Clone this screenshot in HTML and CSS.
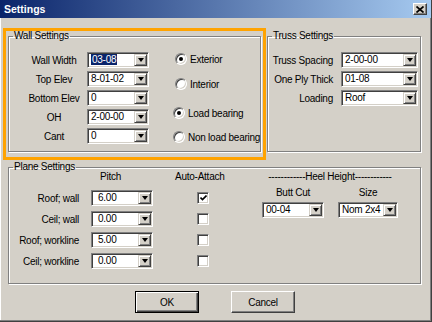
FILE: index.html
```html
<!DOCTYPE html>
<html lang="en">
<head>
    <meta charset="UTF-8">
    <meta name="viewport" content="width=device-width, initial-scale=1.0">
    <title>Settings</title>
    <link rel="stylesheet" href="styles.css">
</head>

<body>
    <div class="dialog">
        <!-- Title bar -->
        <div class="titlebar">
            <span class="title">Settings</span>
            <div class="close-btn">
                <svg width="8" height="7" viewBox="0 0 8 7">
                    <path d="M0.5 0.5 L7.5 6.5 M7.5 0.5 L0.5 6.5" stroke="#000" stroke-width="1.7" fill="none"/>
                </svg>
            </div>
        </div>

        <div class="content">
            <div class="top-row">
                <!-- Highlighted wall group -->
                <div class="highlight">
                    <fieldset class="group wall">
                        <legend>Wall Settings</legend>
                        <div class="wall-body">
                            <div class="wall-grid">
                                <span class="lbl">Wall Width</span>
                                <div class="combo"><span class="val"><span class="sel">03-08</span></span><span class="drop"></span></div>
                                <span class="lbl">Top Elev</span>
                                <div class="combo"><span class="val">8-01-02</span><span class="drop"></span></div>
                                <span class="lbl">Bottom Elev</span>
                                <div class="combo"><span class="val">0</span><span class="drop"></span></div>
                                <span class="lbl">OH</span>
                                <div class="combo"><span class="val">2-00-00</span><span class="drop"></span></div>
                                <span class="lbl">Cant</span>
                                <div class="combo"><span class="val">0</span><span class="drop"></span></div>
                            </div>
                            <div class="radios">
                                <div class="radio-row first"><span class="radio on"></span>Exterior</div>
                                <div class="radio-row second"><span class="radio"></span>Interior</div>
                                <div class="radio-row third"><span class="radio on"></span>Load bearing</div>
                                <div class="radio-row fourth"><span class="radio"></span>Non load bearing</div>
                            </div>
                        </div>
                    </fieldset>
                </div>

                <!-- Truss group -->
                <fieldset class="group truss">
                    <legend>Truss Settings</legend>
                    <div class="truss-grid">
                        <span class="lbl">Truss Spacing</span>
                        <div class="combo wide"><span class="val">2-00-00</span><span class="drop"></span></div>
                        <span class="lbl">One Ply Thick</span>
                        <div class="combo wide"><span class="val">01-08</span><span class="drop"></span></div>
                        <span class="lbl">Loading</span>
                        <div class="combo wide"><span class="val">Roof</span><span class="drop"></span></div>
                    </div>
                </fieldset>
            </div>

            <!-- Plane group -->
            <fieldset class="group plane">
                <legend>Plane Settings</legend>
                <div class="plane-body">
                    <div class="pitch-grid">
                        <span></span>
                        <span class="hdr pitch-hdr">Pitch</span>
                        <span class="hdr">Auto-Attach</span>

                        <span class="lbl">Roof; wall</span>
                        <div class="combo pad"><span class="val">6.00</span><span class="drop"></span></div>
                        <span class="check on"><svg width="7" height="6" viewBox="0 0 7 6"><path d="M0.5 2.5 L2.5 4.5 L6.5 0.5" stroke="#000" stroke-width="1.6" fill="none"/></svg></span>

                        <span class="lbl">Ceil; wall</span>
                        <div class="combo pad"><span class="val">0.00</span><span class="drop"></span></div>
                        <span class="check"></span>

                        <span class="lbl">Roof; workline</span>
                        <div class="combo pad"><span class="val">5.00</span><span class="drop"></span></div>
                        <span class="check"></span>

                        <span class="lbl">Ceil; workline</span>
                        <div class="combo pad"><span class="val">0.00</span><span class="drop"></span></div>
                        <span class="check"></span>
                    </div>

                    <div class="heel">
                        <div class="heel-title">------------Heel Height------------</div>
                        <div class="heel-cols">
                            <div class="heel-col">
                                <span>Butt Cut</span>
                                <div class="combo"><span class="val">00-04</span><span class="drop"></span></div>
                            </div>
                            <div class="heel-col">
                                <span>Size</span>
                                <div class="combo size"><span class="val">Nom 2x4</span><span class="drop"></span></div>
                            </div>
                        </div>
                    </div>
                </div>
            </fieldset>

            <div class="buttons">
                <div class="btn default">OK</div>
                <div class="btn">Cancel</div>
            </div>
        </div>
    </div>
</body>
</html>
```

FILE: styles.css
```css
body {
    margin: 0;
    font-family: "Liberation Sans", Arial, sans-serif;
    font-size: 10px;
    letter-spacing: -0.25px;
    color: #000;
}

.dialog {
    width: 432px;
    height: 322px;
    box-sizing: border-box;
    background-color: #d4d0c8;
    border-right: 1px solid #404040;
    border-bottom: 1px solid #404040;
    box-shadow: inset -1px -1px #808080, inset 1px 0 #fff;
}

/* Title bar */
.titlebar {
    height: 18px;
    display: flex;
    align-items: center;
    justify-content: space-between;
    padding: 0 4px 0 4px;
    background: linear-gradient(to right, #0a246a, #a6caf0);
}

.title {
    color: #fff;
    font-weight: bold;
    font-size: 10.5px;
    letter-spacing: 0;
}

.close-btn {
    width: 14px;
    height: 12px;
    box-sizing: border-box;
    background-color: #d4d0c8;
    border: 1px solid;
    border-color: #fff #404040 #404040 #fff;
    box-shadow: inset -1px -1px #808080;
    display: flex;
    align-items: center;
    justify-content: center;
}

.content {
    padding: 10px 0 0 3px;
}

.top-row {
    display: flex;
    align-items: flex-start;
}

/* Orange highlight around the wall group */
.highlight {
    border: 3px solid #ffa300;
    padding: 0 2px 5px 2px;
}

/* Group boxes */
.group {
    margin: 0;
    padding: 0;
    min-width: 0;
    box-sizing: border-box;
    border: 1px solid #808080;
    box-shadow: 1px 1px 0 #fff, inset 1px 1px 0 #fff;
}

.group legend {
    margin-left: 4px;
    padding: 0 1px;
    line-height: 10px;
}

.wall {
    width: 253px;
    height: 121px;
}

.truss {
    width: 154px;
    height: 121px;
    margin: 3px 0 0 1px;
}

.plane {
    width: 413px;
    height: 122px;
    margin: 2px 0 0 5px;
}

.lbl {
    align-self: center;
    white-space: nowrap;
}

/* Wall settings */
.wall-body {
    display: flex;
    padding: 11px 0 0 13px;
}

.wall-grid {
    display: grid;
    grid-template-columns: 64px 62px;
    grid-auto-rows: 16px;
    row-gap: 3px;
    column-gap: 1px;
}

.wall-grid .lbl {
    text-align: center;
}

.radios {
    margin-left: 24px;
    display: flex;
    flex-direction: column;
}

.radio-row {
    display: flex;
    align-items: center;
    gap: 3px;
    height: 12px;
    white-space: nowrap;
}

.radio-row.first { margin: 1px 0 0 2px; }
.radio-row.second { margin: 13px 0 0 2px; }
.radio-row.third { margin-top: 17px; }
.radio-row.fourth { margin-top: 12px; }

.radio {
    width: 12px;
    height: 12px;
    box-sizing: border-box;
    border-radius: 50%;
    background-color: #fff;
    border: 1px solid;
    border-color: #808080 #fff #fff #808080;
    box-shadow: inset 1px 1px #404040, inset -1px -1px #d4d0c8;
    display: flex;
    align-items: center;
    justify-content: center;
}

.radio.on::after {
    content: "";
    width: 4px;
    height: 4px;
    border-radius: 50%;
    background-color: #000;
}

/* Truss settings */
.truss-grid {
    display: grid;
    grid-template-columns: 65px 77px;
    grid-auto-rows: 16px;
    row-gap: 3px;
    column-gap: 8px;
    padding-top: 11px;
}

.truss-grid .lbl {
    text-align: right;
}

/* Combo boxes */
.combo {
    display: flex;
    box-sizing: border-box;
    width: 62px;
    height: 16px;
    padding: 1px;
    background-color: #fff;
    border: 1px solid;
    border-color: #808080 #fff #fff #808080;
    box-shadow: inset 1px 1px #404040, inset -1px -1px #d4d0c8;
}

.combo.wide { width: 77px; }
.combo.size { width: 60px; }

.combo .val {
    flex: 1;
    padding-left: 2px;
    line-height: 12px;
    overflow: hidden;
    white-space: nowrap;
}

.combo.pad .val {
    padding-left: 5px;
}

.sel {
    background-color: #0a246a;
    color: #fff;
    padding: 0 1px;
}

.drop {
    width: 13px;
    box-sizing: border-box;
    background-color: #d4d0c8;
    border: 1px solid;
    border-color: #d4d0c8 #404040 #404040 #d4d0c8;
    box-shadow: inset 1px 1px #fff, inset -1px -1px #808080;
    display: flex;
    align-items: center;
    justify-content: center;
}

.drop::after {
    content: "";
    width: 0;
    height: 0;
    border-left: 3.5px solid transparent;
    border-right: 3.5px solid transparent;
    border-top: 4px solid #000;
}

/* Plane settings */
.plane-body {
    display: flex;
}

.pitch-grid {
    display: grid;
    grid-template-columns: 82px 84px 56px;
    grid-template-rows: 13px repeat(4, 16px);
    row-gap: 5px;
}

.pitch-grid .lbl {
    text-align: right;
    padding-right: 12px;
}

.hdr {
    line-height: 10px;
    white-space: nowrap;
}

.pitch-hdr {
    padding-left: 9px;
}

.pitch-grid .hdr:last-of-type {
    text-align: center;
}

.check {
    justify-self: center;
    align-self: center;
    width: 12px;
    height: 12px;
    box-sizing: border-box;
    background-color: #fff;
    border: 1px solid;
    border-color: #808080 #fff #fff #808080;
    box-shadow: inset 1px 1px #404040, inset -1px -1px #d4d0c8;
    display: flex;
    align-items: center;
    justify-content: center;
}

.heel {
    margin-left: 31px;
}

.heel-title {
    line-height: 10px;
    text-align: center;
    white-space: nowrap;
    margin-bottom: 6px;
}

.heel-cols {
    display: flex;
    gap: 14px;
}

.heel-col {
    display: flex;
    flex-direction: column;
    align-items: center;
    gap: 4px;
    line-height: 10px;
}

/* Buttons */
.buttons {
    display: flex;
    gap: 32px;
    padding-left: 132px;
    margin-top: 7px;
}

.btn {
    width: 64px;
    height: 22px;
    box-sizing: border-box;
    border: 1px solid;
    border-color: #fff #404040 #404040 #fff;
    box-shadow: inset -1px -1px #808080;
    display: flex;
    align-items: center;
    justify-content: center;
}

.btn.default {
    border-color: #000;
    box-shadow: inset 1px 1px #fff, inset -1px -1px #404040, inset -2px -2px #808080;
}
```
